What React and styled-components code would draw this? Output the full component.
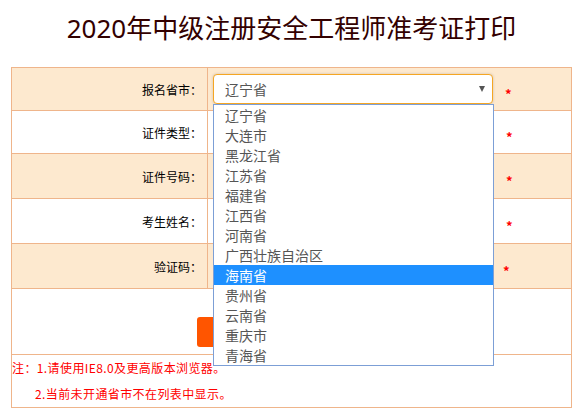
import React from "react";
import styled, { createGlobalStyle } from "styled-components";

const GlobalStyle = createGlobalStyle`
  html, body { margin: 0; padding: 0; background: #fff; }
  body { font-family: "Noto Sans CJK SC", "Noto Sans", sans-serif; }
`;

const BORDER = "#efb58b";

const Page = styled.div`
  width: 561px;
  margin-left: 11px;
`;

const Title = styled.h1`
  margin: 10px 0 21px;
  font-family: "Noto Sans", "Noto Sans CJK SC", sans-serif;
  font-size: 26px;
  font-weight: normal;
  line-height: 36px;
  text-align: center;
  color: #330000;
`;

const Form = styled.div`
  border: 1px solid ${BORDER};
`;

const Row = styled.div`
  display: grid;
  grid-template-columns: 196px 1fr;
  box-sizing: border-box;
  height: ${(p) => p.$h}px;
  background: ${(p) => (p.$shaded ? "#fde9cf" : "#fff")};
  border-bottom: 1px solid ${BORDER};
`;

const Label = styled.div`
  display: flex;
  align-items: center;
  justify-content: flex-end;
  padding-right: 5px;
  border-right: 1px solid ${BORDER};
  font-size: 12px;
  color: #000;
`;

const Value = styled.div`
  display: flex;
  align-items: center;
  padding-left: 5px;
`;

const SelectBox = styled.div`
  position: relative;
  box-sizing: border-box;
  width: 280px;
  height: 30px;
  display: flex;
  align-items: center;
  padding-left: 11px;
  background: #fff;
  border: 1px solid ${(p) => (p.$focus ? "#f5a623" : "#ccc")};
  border-radius: 4px;
  box-shadow: ${(p) => (p.$focus ? "0 0 3px rgba(0,0,0,0.18)" : "none")};
  font-size: 14px;
  color: #555;
`;

const Arrow = styled.span`
  margin-left: auto;
  margin-right: 7px;
  width: 0;
  height: 0;
  border-left: 3px solid transparent;
  border-right: 3px solid transparent;
  border-top: 6px solid #555;
`;

const List = styled.ul`
  position: absolute;
  z-index: 10;
  top: 29px;
  left: -1px;
  box-sizing: border-box;
  width: 281px;
  margin: 0;
  padding: 0;
  list-style: none;
  background: #fff;
  border: 1px solid #7c9fd6;
`;

const Item = styled.li`
  height: 20px;
  line-height: 20px;
  padding-left: 11px;
  font-size: 14px;
  color: ${(p) => (p.$active ? "#fff" : "#555")};
  background: ${(p) => (p.$active ? "#1e90ff" : "transparent")};
  white-space: nowrap;
`;

const TextInput = styled.input`
  box-sizing: border-box;
  width: ${(p) => p.$w}px;
  height: 32px;
  padding: 0 10px;
  border: 1px solid #ccc;
  border-radius: 4px;
  background: #fff;
  font-size: 14px;
  outline: none;
`;

const Star = styled.span`
  margin-left: ${(p) => p.$gap}px;
  margin-top: 9px;
  font-size: 13px;
  font-weight: bold;
  color: #f00;
`;

const ButtonRow = styled.div`
  box-sizing: border-box;
  height: 66px;
  display: flex;
  justify-content: center;
  padding-top: 28px;
  border-bottom: 1px solid ${BORDER};
`;

const PrintButton = styled.button`
  width: 189px;
  height: 30px;
  border: none;
  border-radius: 3px;
  background: #ff5500;
  color: #fff;
  font-size: 14px;
  font-family: inherit;
`;

const Notes = styled.div`
  height: 52px;
  font-size: 12px;
  line-height: 26px;
  letter-spacing: 0.4px;
  color: #f00;
`;

const NoteLine = styled.div`
  padding-left: ${(p) => (p.$indent ? 23 : 0)}px;
  white-space: nowrap;
`;

const provinces = [
  "辽宁省",
  "大连市",
  "黑龙江省",
  "江苏省",
  "福建省",
  "江西省",
  "河南省",
  "广西壮族自治区",
  "海南省",
  "贵州省",
  "云南省",
  "重庆市",
  "青海省",
];

export default function App() {
  return (
    <>
      <GlobalStyle />
      <Page>
        <Title>2020年中级注册安全工程师准考证打印</Title>
        <Form>
          <Row $h={43} $shaded>
            <Label>报名省市：</Label>
            <Value>
              <SelectBox $focus>
                辽宁省
                <Arrow />
                <List>
                  {provinces.map((p) => (
                    <Item key={p} $active={p === "海南省"}>
                      {p}
                    </Item>
                  ))}
                </List>
              </SelectBox>
              <Star $gap={12}>*</Star>
            </Value>
          </Row>
          <Row $h={43}>
            <Label>证件类型：</Label>
            <Value>
              <SelectBox>
                <Arrow />
              </SelectBox>
              <Star $gap={13}>*</Star>
            </Value>
          </Row>
          <Row $h={45} $shaded>
            <Label>证件号码：</Label>
            <Value>
              <TextInput $w={281} />
              <Star $gap={12}>*</Star>
            </Value>
          </Row>
          <Row $h={45}>
            <Label>考生姓名：</Label>
            <Value>
              <TextInput $w={281} />
              <Star $gap={12}>*</Star>
            </Value>
          </Row>
          <Row $h={45} $shaded>
            <Label>验证码：</Label>
            <Value>
              <TextInput $w={278} />
              <Star $gap={12}>*</Star>
            </Value>
          </Row>
          <ButtonRow>
            <PrintButton>打 印</PrintButton>
          </ButtonRow>
          <Notes>
            <NoteLine>注：1.请使用IE8.0及更高版本浏览器。</NoteLine>
            <NoteLine $indent>2.当前未开通省市不在列表中显示。</NoteLine>
          </Notes>
        </Form>
      </Page>
    </>
  );
}
